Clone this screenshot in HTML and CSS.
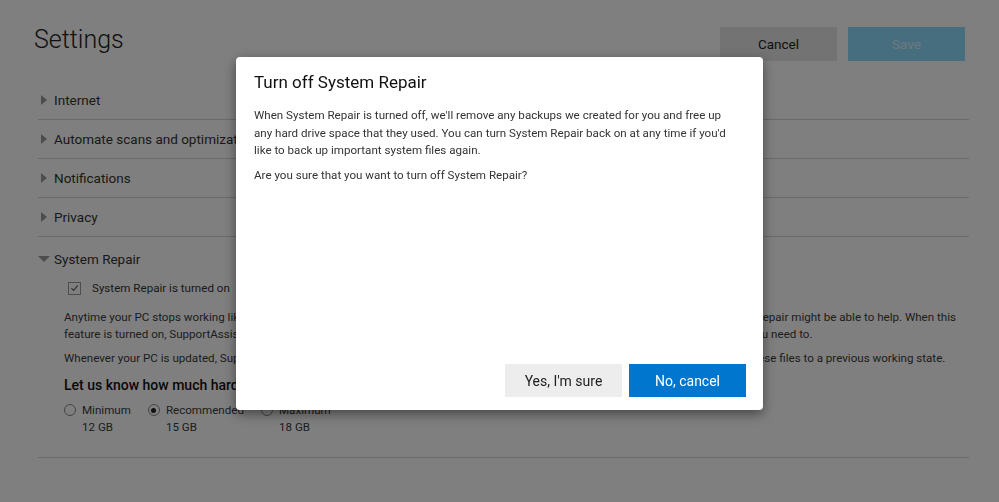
FILE: index.html
```html
<!DOCTYPE html>
<html lang="en">
<head>
<meta charset="utf-8">
<title>Settings</title>
<link rel="stylesheet" href="styles.css">
</head>
<body>
<div class="page">
  <header class="header">
    <h1 class="title">Settings</h1>
    <div class="header-actions">
      <button class="btn btn-cancel">Cancel</button>
      <button class="btn btn-save">Save</button>
    </div>
  </header>

  <section class="row"><span class="tri tri-right"></span><span class="row-label">Internet</span></section>
  <section class="row"><span class="tri tri-right"></span><span class="row-label">Automate scans and optimizations</span></section>
  <section class="row"><span class="tri tri-right"></span><span class="row-label">Notifications</span></section>
  <section class="row"><span class="tri tri-right"></span><span class="row-label">Privacy</span></section>

  <section class="expanded">
    <div class="exp-head"><span class="tri tri-down"></span><span class="row-label">System Repair</span></div>
    <div class="check-row">
      <span class="checkbox">
        <svg viewBox="0 0 12 12" width="12" height="12"><path d="M2.6 6.2 L5 8.6 L9.6 3.2" fill="none" stroke="#555" stroke-width="1.1"/></svg>
      </span>
      <span class="check-label">System Repair is turned on</span>
    </div>
    <p class="para">Anytime your PC stops working like it should, or you run into problems such as crashes, slow startups, or errors, SupportAssist System Repair might be able to help. When this<br>feature is turned on, SupportAssist creates backups of important system files on your PC, which can be used to restore your PC when you need to.</p>
    <p class="para">Whenever your PC is updated, SupportAssist automatically creates a new backup of your system files, so that you can always restore these files to a previous working state.</p>
    <h3 class="subhead">Let us know how much hard drive space System Repair can use</h3>
    <div class="radios">
      <div class="opt">
        <span class="radio"></span>
        <span class="opt-label">Minimum</span>
        <span class="opt-size">12 GB</span>
      </div>
      <div class="opt">
        <span class="radio radio-on"></span>
        <span class="opt-label">Recommended</span>
        <span class="opt-size">15 GB</span>
      </div>
      <div class="opt">
        <span class="radio"></span>
        <span class="opt-label">Maximum</span>
        <span class="opt-size">18 GB</span>
      </div>
    </div>
  </section>
</div>

<div class="overlay"></div>

<div class="dialog" role="dialog">
  <h2 class="dlg-title">Turn off System Repair</h2>
  <p class="dlg-text">When System Repair is turned off, we'll remove any backups we created for you and free up any hard drive space that they used. You can turn System Repair back on at any time if you'd like to back up important system files again.</p>
  <p class="dlg-text">Are you sure that you want to turn off System Repair?</p>
  <div class="dlg-actions">
    <button class="btn btn-yes">Yes, I'm sure</button>
    <button class="btn btn-no">No, cancel</button>
  </div>
</div>
</body>
</html>
```

FILE: styles.css
```css
* { box-sizing: border-box; }

html, body {
  margin: 0;
  padding: 0;
  width: 999px;
  height: 502px;
  overflow: hidden;
  background: #ffffff;
  font-family: Roboto, "Liberation Sans", Arial, sans-serif;
  color: #333;
}

.page {
  padding: 0 30px 0 38px;
}

.header {
  display: flex;
  align-items: center;
  justify-content: space-between;
  height: 34px;
  margin: 27px 4px 20px -4px;
}

.title {
  margin: 0;
  font-size: 25px;
  font-weight: 300;
  color: #222;
  line-height: 30px;
  position: relative;
  top: -4px;
}

.header-actions {
  display: flex;
  gap: 11px;
}

.btn {
  border: 0;
  font-family: inherit;
  font-size: 14px;
  width: 117px;
  height: 34px;
  padding: 0;
  border-radius: 0;
}

.btn-cancel {
  background: #e6e6e6;
  color: #222;
  font-size: 13.5px;
}

.btn-save {
  background: #8cdcff;
  color: #e0f2ff;
  font-size: 13.5px;
}

.row {
  display: flex;
  align-items: center;
  height: 39px;
  border-bottom: 1px solid #d4d4d4;
  padding-left: 3px;
}

.row-label {
  font-size: 13.5px;
  color: #333;
}

.tri {
  display: inline-block;
  width: 0;
  height: 0;
}

.tri-right {
  border-top: 5px solid transparent;
  border-bottom: 5px solid transparent;
  border-left: 6px solid #9a9a9a;
  margin-right: 7px;
}

.tri-down {
  border-left: 6px solid transparent;
  border-right: 6px solid transparent;
  border-top: 6px solid #9a9a9a;
  margin-right: 4px;
}

.expanded {
  border-bottom: 1px solid #d4d4d4;
  padding-bottom: 21px;
}

.exp-head {
  display: flex;
  align-items: center;
  height: 18px;
  margin-top: 13px;
}

.check-row {
  display: flex;
  align-items: center;
  height: 18px;
  margin: 11px 0 0 30px;
}

.checkbox {
  width: 13px;
  height: 13px;
  border: 1px solid #9a9a9a;
  display: flex;
  align-items: center;
  justify-content: center;
  margin-right: 11px;
}

.checkbox svg { display: block; }

.check-label {
  font-size: 11.6px;
  color: #333;
}

.para {
  margin: 12px 0 0 26px;
  font-size: 11.6px;
  line-height: 16.5px;
  color: #3a3a3a;
  white-space: nowrap;
}

.para + .para {
  margin-top: 8px;
}

.subhead {
  margin: 9px 0 0 26px;
  font-size: 14px;
  font-weight: 500;
  line-height: 18px;
  color: #111;
}

.radios {
  display: flex;
  gap: 17px;
  margin: 8px 0 0 26px;
}

.opt {
  display: grid;
  grid-template-columns: 12px auto;
  column-gap: 6px;
  align-items: center;
}

.radio {
  width: 12px;
  height: 12px;
  border: 1px solid #888;
  border-radius: 50%;
  display: block;
  position: relative;
}

.radio-on::after {
  content: "";
  position: absolute;
  left: 2.5px;
  top: 2.5px;
  width: 5px;
  height: 5px;
  border-radius: 50%;
  background: #222;
}

.opt-label,
.opt-size {
  font-size: 11.6px;
  line-height: 17px;
  color: #3a3a3a;
}

.opt-size {
  grid-column: 2;
}

.overlay {
  position: fixed;
  inset: 0;
  background: rgba(0, 0, 0, 0.5);
}

.dialog {
  position: absolute;
  left: 236px;
  top: 57px;
  width: 527px;
  height: 353px;
  background: #fff;
  border-radius: 4px;
  box-shadow: 0 4px 12px rgba(0, 0, 0, 0.45);
  padding: 14px 17px 13px 18px;
  display: flex;
  flex-direction: column;
}

.dlg-title {
  margin: 0;
  font-size: 17px;
  font-weight: 400;
  line-height: 22px;
  color: #111;
}

.dlg-text {
  margin: 14px 14px 0 0;
  font-size: 11.6px;
  line-height: 17.5px;
  color: #333;
}

.dlg-text + .dlg-text {
  margin-top: 7.5px;
}

.dlg-actions {
  margin-top: auto;
  display: flex;
  justify-content: flex-end;
  gap: 7px;
}

.btn-yes {
  height: 33px;
  background: #ededed;
  color: #222;
}

.btn-no {
  height: 33px;
  background: #0076ce;
  color: #fff;
}
```
